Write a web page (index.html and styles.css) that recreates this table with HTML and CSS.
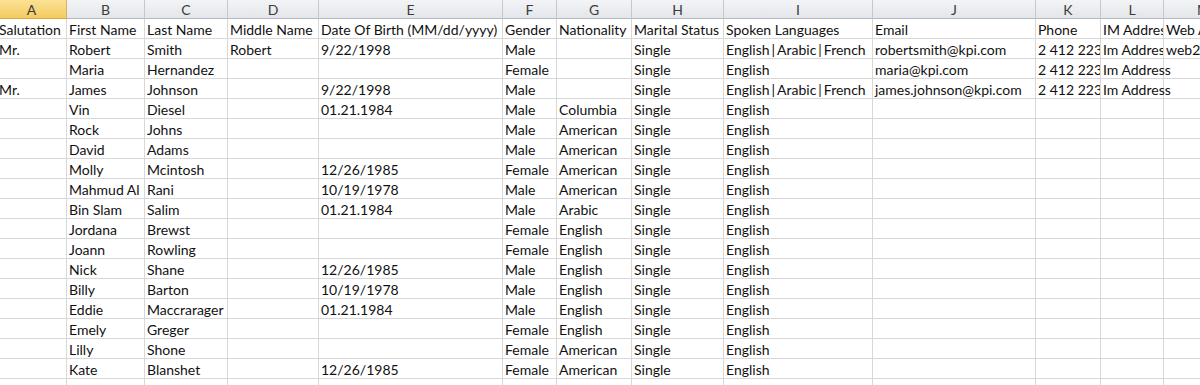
FILE: index.html
```html
<!DOCTYPE html>
<html lang="en">
<head>
  <meta charset="UTF-8" />
  <title>Contacts.xlsx</title>
  <link rel="stylesheet" href="styles.css">
</head>
<body>

<div class="sheet">
<table class="grid">
  <colgroup>
    <col style="width:70px"><col style="width:78px"><col style="width:83px"><col style="width:91px">
    <col style="width:184px"><col style="width:54px"><col style="width:75px"><col style="width:92px">
    <col style="width:149px"><col style="width:163px"><col style="width:65px"><col style="width:63px">
    <col style="width:80px">
  </colgroup>
  <thead>
    <tr>
      <th class="active">A</th><th>B</th><th>C</th><th>D</th><th>E</th><th>F</th><th>G</th>
      <th>H</th><th>I</th><th>J</th><th>K</th><th>L</th><th>M</th>
    </tr>
  </thead>
  <tbody>
    <tr><td>Salutation</td><td>First Name</td><td>Last Name</td><td>Middle Name</td><td>Date Of Birth (MM/dd/yyyy)</td><td>Gender</td><td>Nationality</td><td>Marital Status</td><td>Spoken Languages</td><td>Email</td><td>Phone</td><td>IM Address</td><td>Web Address</td></tr>
    <tr><td>Mr.</td><td>Robert</td><td>Smith</td><td>Robert</td><td>9/22/1998</td><td>Male</td><td></td><td>Single</td><td>English<span class="pipe">|</span>Arabic<span class="pipe">|</span>French</td><td>robertsmith@kpi.com</td><td>2 412 223 3344</td><td>Im Address</td><td>web2.kpi.com</td></tr>
    <tr><td></td><td>Maria</td><td>Hernandez</td><td></td><td></td><td>Female</td><td></td><td>Single</td><td>English</td><td>maria@kpi.com</td><td>2 412 223 3344</td><td class="spill">Im Address</td><td></td></tr>
    <tr><td>Mr.</td><td>James</td><td>Johnson</td><td></td><td>9/22/1998</td><td>Male</td><td></td><td>Single</td><td>English<span class="pipe">|</span>Arabic<span class="pipe">|</span>French</td><td>james.johnson@kpi.com</td><td>2 412 223 3344</td><td class="spill">Im Address</td><td></td></tr>
    <tr><td></td><td>Vin</td><td>Diesel</td><td></td><td>01.21.1984</td><td>Male</td><td>Columbia</td><td>Single</td><td>English</td><td></td><td></td><td></td><td></td></tr>
    <tr><td></td><td>Rock</td><td>Johns</td><td></td><td></td><td>Male</td><td>American</td><td>Single</td><td>English</td><td></td><td></td><td></td><td></td></tr>
    <tr><td></td><td>David</td><td>Adams</td><td></td><td></td><td>Male</td><td>American</td><td>Single</td><td>English</td><td></td><td></td><td></td><td></td></tr>
    <tr><td></td><td>Molly</td><td>Mcintosh</td><td></td><td>12/26/1985</td><td>Female</td><td>American</td><td>Single</td><td>English</td><td></td><td></td><td></td><td></td></tr>
    <tr><td></td><td>Mahmud Al</td><td>Rani</td><td></td><td>10/19/1978</td><td>Male</td><td>American</td><td>Single</td><td>English</td><td></td><td></td><td></td><td></td></tr>
    <tr><td></td><td>Bin Slam</td><td>Salim</td><td></td><td>01.21.1984</td><td>Male</td><td>Arabic</td><td>Single</td><td>English</td><td></td><td></td><td></td><td></td></tr>
    <tr><td></td><td>Jordana</td><td>Brewst</td><td></td><td></td><td>Female</td><td>English</td><td>Single</td><td>English</td><td></td><td></td><td></td><td></td></tr>
    <tr><td></td><td>Joann</td><td>Rowling</td><td></td><td></td><td>Female</td><td>English</td><td>Single</td><td>English</td><td></td><td></td><td></td><td></td></tr>
    <tr><td></td><td>Nick</td><td>Shane</td><td></td><td>12/26/1985</td><td>Male</td><td>English</td><td>Single</td><td>English</td><td></td><td></td><td></td><td></td></tr>
    <tr><td></td><td>Billy</td><td>Barton</td><td></td><td>10/19/1978</td><td>Male</td><td>English</td><td>Single</td><td>English</td><td></td><td></td><td></td><td></td></tr>
    <tr><td></td><td>Eddie</td><td>Maccrarager</td><td></td><td>01.21.1984</td><td>Male</td><td>English</td><td>Single</td><td>English</td><td></td><td></td><td></td><td></td></tr>
    <tr><td></td><td>Emely</td><td>Greger</td><td></td><td></td><td>Female</td><td>English</td><td>Single</td><td>English</td><td></td><td></td><td></td><td></td></tr>
    <tr><td></td><td>Lilly</td><td>Shone</td><td></td><td></td><td>Female</td><td>American</td><td>Single</td><td>English</td><td></td><td></td><td></td><td></td></tr>
    <tr><td></td><td>Kate</td><td>Blanshet</td><td></td><td>12/26/1985</td><td>Female</td><td>American</td><td>Single</td><td>English</td><td></td><td></td><td></td><td></td></tr>
    <tr><td></td><td></td><td></td><td></td><td></td><td></td><td></td><td></td><td></td><td></td><td></td><td></td><td></td></tr>
  </tbody>
</table>
</div>

</body>
</html>
```

FILE: styles.css
```css
html, body {
  margin: 0;
  padding: 0;
  background: #fff;
}
.sheet {
  width: 1200px;
  height: 385px;
  overflow: hidden;
}
.grid {
  table-layout: fixed;
  width: 1247px;
  margin-left: -3px;
  border-collapse: separate;
  border-spacing: 0;
  font-family: Lato, "Open Sans", sans-serif;
  font-size: 14px;
  color: #111;
}
.grid th {
  height: 19px;
  padding: 1px 0 0;
  font-weight: normal;
  font-size: 14px;
  color: #3c3c3c;
  text-align: center;
  line-height: 17px;
  background: linear-gradient(#f3f4f6, #e3e6ea);
  border-right: 1px solid #c4c8cd;
  border-bottom: 1px solid #b5bac0;
  box-sizing: border-box;
  overflow: hidden;
}
.grid th.active {
  background: linear-gradient(#fbe294, #f4cb62);
  border-bottom-color: #e0a83a;
  border-right-color: #d9b15c;
}
.grid td {
  height: 20px;
  padding: 2px 0 0 2px;
  line-height: 17px;
  white-space: nowrap;
  overflow: hidden;
  border-right: 1px solid #d8d8d8;
  border-bottom: 1px solid #d8d8d8;
  box-sizing: border-box;
}
.grid td.spill {
  overflow: visible;
}
.pipe {
  margin: 0 2px;
}
```
